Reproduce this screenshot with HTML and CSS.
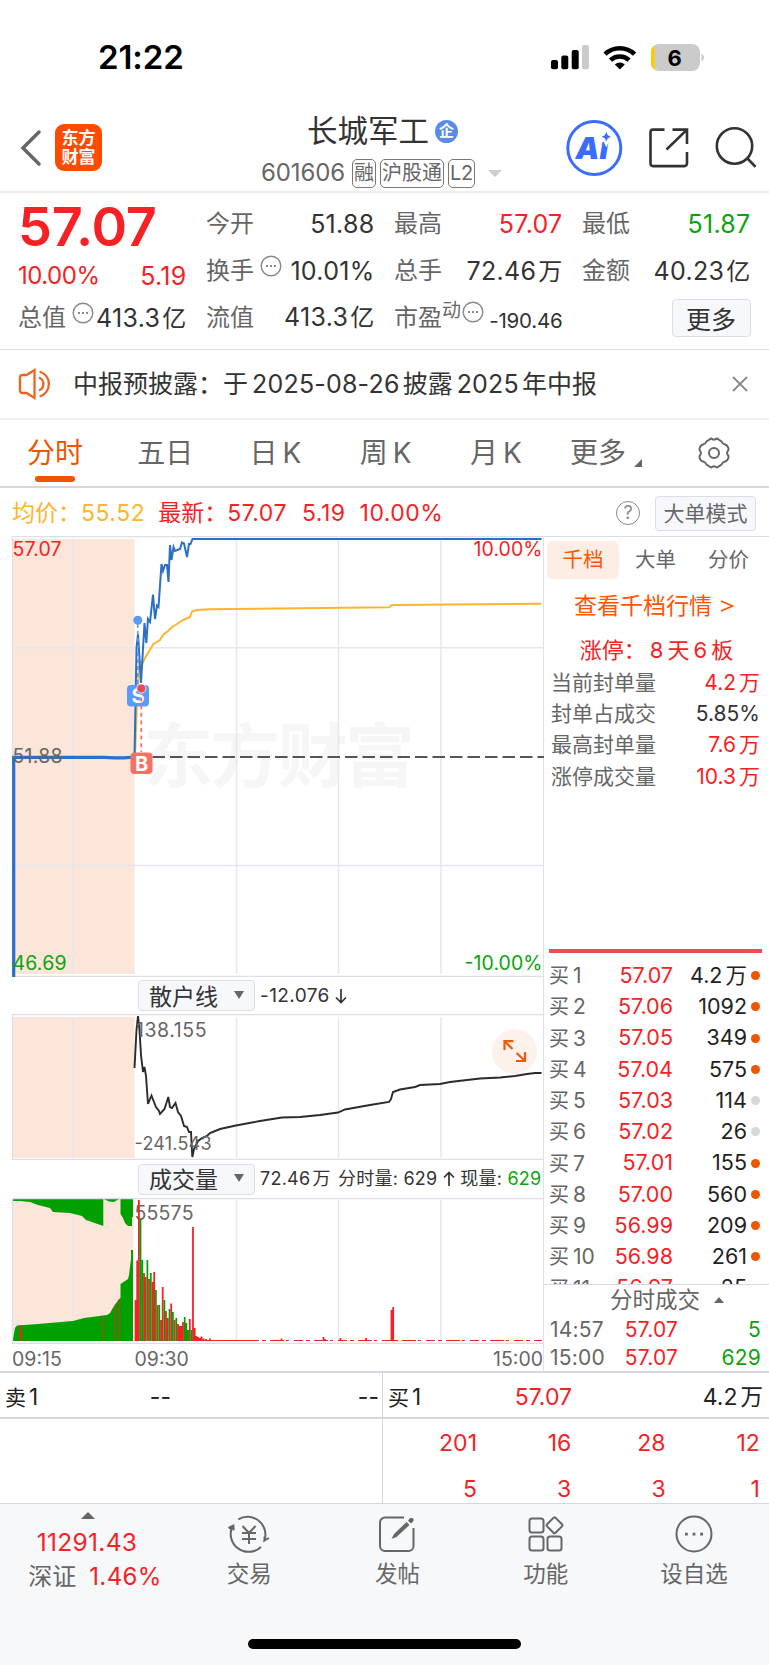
FILE: index.html
```html
<!DOCTYPE html>
<html lang="zh-CN">
<head>
    <meta charset="UTF-8">
    <title>长城军工 601606</title>
    <link rel="stylesheet" href="styles.css">
</head>
<body>
    <div class="status-bar">
        <span class="clock">21:22</span>
        <svg class="status-icons" width="156" height="30" viewBox="550 43 156 30">
            <rect x="551" y="60" width="7" height="9.3" rx="2"/>
            <rect x="561.3" y="55.500" width="7" height="13.800" rx="2"/>
            <rect x="571.700" y="50" width="7" height="19.300" rx="2"/>
            <rect x="582" y="45" width="7" height="24.300" rx="2" fill="#cbcbcb"/>
            <g fill="none" stroke="#000" stroke-width="4.600">
                <path d="M605 54.200a21.500 21.500 0 0 1 29.600 0"/>
                <path d="M610.500 60.200a13.500 13.500 0 0 1 18.600 0"/>
            </g>
            <path d="M619.800 69.500l-5-5a7.500 7.500 0 0 1 10 0z"/>
            <rect x="651" y="44" width="49" height="27" rx="8" fill="#cbcbcb"/>
            <path d="M654.500 45.400v24.200a8 8 0 0 1-3.500-6.600v-11a8 8 0 0 1 3.500-6.600z" fill="#fc0"/>
            <path d="M701.500 53.500q5 4 0 8z" fill="#cbcbcb"/>
            <text class="battery" x="667.500" y="65.500">6</text>
        </svg>
    </div>

    <div class="header">
        <svg class="back" width="22" height="38" viewBox="0 0 22 38"><path d="M19 3L3 19l16 16"/></svg>
        <div class="logo">东方<br>财富</div>
        <div class="title">
            <div class="name">长城军工<span class="corp">企</span></div>
            <div class="code">
                <span class="number">601606</span>
                <span class="tag">融</span>
                <span class="tag">沪股通</span>
                <span class="tag">L2</span>
                <span class="arrow-down"></span>
            </div>
        </div>
        <svg class="tools" width="196" height="60" viewBox="565 118 196 60">
            <circle cx="594.300" cy="148" r="26.500" fill="none" stroke="#3a6cff" stroke-width="3"/>
            <text class="ai" x="575.500 599.500" y="158.500">Ai</text>
            <path d="M606.300 132l1.500 3.200 3.200 1.500-3.200 1.500-1.500 3.200-1.500-3.200-3.200-1.500 3.200-1.500z" fill="#3a6cff" stroke="#fff" stroke-width="5" paint-order="stroke"/>
            <g fill="none" stroke="#333" stroke-width="2.600">
                <path d="M664.500 129.600H653a2.500 2.500 0 0 0-2.500 2.500v31.500a2.500 2.500 0 0 0 2.500 2.500h31.500a2.500 2.500 0 0 0 2.500-2.500V152M672.500 129.600H687V144M687 129.600L666.500 149.500"/>
                <circle cx="734.500" cy="146" r="17.700"/>
                <path d="M747.500 158.500l8 8.300"/>
            </g>
        </svg>
    </div>

    <div class="quote">
        <div class="col first">
            <div class="price">57.07</div>
            <div class="cell change"><b class="red">10.00%</b><b class="red">5.19</b></div>
            <div class="cell"><span>总值</span><svg class="more-dots" width="22" height="22" viewBox="0 0 22 22"><circle cx="11" cy="11" r="9.800"/><path d="M6 11h2m2 0h2m2 0h2"/></svg><b>413.3<i>亿</i></b></div>
        </div>
        <div class="col">
            <div class="cell"><span>今开</span><b>51.88</b></div>
            <div class="cell"><span>换手</span><svg class="more-dots" width="22" height="22" viewBox="0 0 22 22"><circle cx="11" cy="11" r="9.800"/><path d="M6 11h2m2 0h2m2 0h2"/></svg><b>10.01%</b></div>
            <div class="cell"><span>流值</span><b>413.3<i>亿</i></b></div>
        </div>
        <div class="col">
            <div class="cell"><span>最高</span><b class="red">57.07</b></div>
            <div class="cell"><span>总手</span><b>72.46<i>万</i></b></div>
            <div class="cell"><span>市盈<sup>动</sup></span><svg class="more-dots pe-dots" width="22" height="22" viewBox="0 0 22 22"><circle cx="11" cy="11" r="9.800"/><path d="M6 11h2m2 0h2m2 0h2"/></svg><b class="small">-190.46</b></div>
        </div>
        <div class="col">
            <div class="cell"><span>最低</span><b class="green">51.87</b></div>
            <div class="cell"><span>金额</span><b>40.23<i>亿</i></b></div>
            <div class="cell last"><button class="more">更多</button></div>
        </div>
    </div>

    <div class="notice">
        <svg width="36" height="42" viewBox="0 0 36 42">
            <path d="M2 14.500q0-2.500 2.500-2.500h4L16.500 7v28L8.500 30h-4q-2.500 0-2.500-2.500zM21 14.500a7 7 0 0 1 0 13M21.500 8.500a13 13 0 0 1 0 25"/>
        </svg>
        <span class="notice-text">中报预披露：于<b>2025-08-26</b>披露<b>2025</b>年中报</span>
        <svg class="close" width="16" height="16" viewBox="0 0 16 16"><path d="M1 1l14 14M15 1L1 15"/></svg>
    </div>

    <div class="tabs">
        <span class="tab active">分时</span>
        <span class="tab">五日</span>
        <span class="tab">日<b>K</b></span>
        <span class="tab">周<b>K</b></span>
        <span class="tab">月<b>K</b></span>
        <span class="tab">更多<i class="corner"></i></span>
        <svg class="gear" width="34" height="34" viewBox="0 0 34 34">
            <path d="M12.500 3.500Q14 2 15.500 3.200Q17 4.200 18.500 3.200Q20 2 21.500 3.500L24.500 5.500Q25.500 8 28 8.500Q30.500 9 31.500 12.500Q32 14 30.500 15.500Q29.500 17 30.500 18.500Q32 20 31.500 21.500Q30.500 25 28 25.500Q25.500 26 24.500 28.500L21.500 30.500Q20 32 18.500 30.800Q17 29.800 15.500 30.800Q14 32 12.500 30.500L9.500 28.500Q8.500 26 6 25.500Q3.500 25 2.500 21.500Q2 20 3.500 18.500Q4.500 17 3.500 15.500Q2 14 2.500 12.500Q3.500 9 6 8.500Q8.500 8 9.500 5.500z"/>
            <circle cx="17" cy="17" r="5"/>
        </svg>
    </div>

    <div class="summary">
        <span class="avg">均价：<b>55.52</b></span>
        <span class="red latest">最新：<b>57.07</b></span>
        <b class="red">5.19</b>
        <b class="red pct">10.00%</b>
        <span class="help">?</span>
        <button class="mode">大单模式</button>
    </div>

    <div class="main">
        <div class="charts">
            <!-- 分时走势 -->
            <svg width="544" height="441" viewBox="0 536 544 441">
                <rect x="12.500" y="539" width="122" height="435" fill="#fce5d9"/>
                <text class="watermark" x="143" y="782" textLength="272">东方财富</text>
                <path class="grid" d="M73 539V974M236.500 539V974M338.500 539V974M441 539V974M12 647.700H544M12 865.500H544"/>
                <path class="frame" d="M12.500 977V536.500H544M12 976.500H544"/>
                <path d="M135 757H544" stroke="#555" stroke-width="2" stroke-dasharray="12.500 5" fill="none"/>
                <path d="M135 757L137 700L139.500 661L142.600 663L145 658L148 653L151 648L153.500 644L160 640L163 635L168 631L172 627L177 624L183 620L190 617L192 611.500L197 610L210 609.300L389 607.200L392 605L541.500 603.800" fill="none" stroke="#fdb52e" stroke-width="2"/>
                <path d="M13.700 977V757.300H104L115 757.800H124L134.500 757" fill="none" stroke="#2b70c4" stroke-width="3.200"/>
                <path d="M134.500 757L136.500 648L138 634L141 683L144.500 623L146.300 643L148 619L150 622L153 594.500L155 619L157 605.500L158.500 607L161.500 564L163 571L165 565L167 565L168.500 582L170 545L171.500 560L173.500 547L175 551L180 549L182 542.500L184 543.500L187 557L189 544L190.500 544L192.500 539H541.500" fill="none" stroke="#2b70c4" stroke-width="2"/>
                <path d="M137.800 624V685" stroke="#5a9bf7" stroke-width="1.600" stroke-dasharray="4 3"/>
                <rect x="127" y="685" width="22" height="21.500" rx="4" fill="#5a9bf7"/>
                <text class="mark" x="138" y="703">S</text>
                <path d="M141.300 690V752" stroke="#fb6f62" stroke-width="1.800" stroke-dasharray="4 3.600"/>
                <rect x="130.500" y="752.500" width="22" height="21.500" rx="4" fill="#fb6f62"/>
                <text class="mark" x="141.500" y="771">B</text>
                <circle cx="137.800" cy="620.300" r="4.500" fill="#5a9bf7"/>
                <circle cx="141.300" cy="688.500" r="4.600" fill="#e04f57" stroke="#fff" stroke-width=".8"/>
                <g class="axis">
                    <text x="12.500" y="556" textLength="49" fill="#f52225">57.07</text>
                    <text x="12.500" y="763" textLength="50">51.88</text>
                    <text x="12.500" y="969.500" textLength="54" fill="#0ca30c">46.69</text>
                    <text x="473.500" y="556" textLength="69" fill="#f52225">10.00%</text>
                    <text x="464.500" y="969.500" textLength="78" fill="#0ca30c">-10.00%</text>
                </g>
            </svg>

            <div class="indicator">
                <button class="picker">散户线</button>
                <b>-12.076 <svg width="12" height="16" viewBox="0 0 12 16"><path d="M6 1v13M1 9.500l5 5 5-5"/></svg></b>
            </div>

            <!-- 散户线 -->
            <svg width="544" height="146" viewBox="0 1014 544 146">
                <rect x="12.500" y="1017" width="122" height="141" fill="#fce5d9"/>
                <path class="grid" d="M73 1017V1158M236.500 1017V1158M338.500 1017V1158M441 1017V1158"/>
                <path class="frame" d="M12.500 1160V1014.500H544M12 1159.500H544"/>
                <circle cx="514.500" cy="1051.500" r="22.500" fill="#fdf1eb"/>
                <path d="M504.500 1050V1041.200H513.500M504.500 1041.200L512.500 1049M525 1052V1061H516M525 1061L516.500 1053" fill="none" stroke="#f15a0a" stroke-width="2.200"/>
                <path d="M134.500 1068L136.500 1030L138 1016L139.500 1030L141 1055L143 1072L144.500 1067L146 1076L148 1104L151.500 1095.500L154 1102L156 1107L159 1111L160 1114L164.500 1109L168.300 1097L170 1107L172 1108L175.500 1103L178 1112L181 1116L184 1126L187 1127L189 1132L191 1132L192.300 1157L194 1149L198 1141L202 1138L207 1136L210 1133L220 1129L236 1125.500L260 1121L282 1117.500L300 1117L320 1115L338 1112.500L345 1109.500L370 1105L389 1102L391 1099L393 1092L400 1089.500L415 1087L420 1085L440 1084L450 1082L480 1078.500L500 1077.500L515 1076L527 1074L535 1073H541.500" fill="none" stroke="#2b2b2b" stroke-width="1.900"/>
                <g class="axis">
                    <text x="136" y="1036.500" textLength="70.500">138.155</text>
                    <text class="low" x="134.500" y="1149.500" textLength="77">-241.543</text>
                </g>
            </svg>

            <div class="indicator second">
                <button class="picker">成交量</button>
                <b>72.46<i>万</i> 分时量: 629 <svg width="12" height="16" viewBox="0 0 12 16"><path d="M6 15V2M1 6.500l5-5 5 5"/></svg> 现量: <em class="green">629</em></b>
            </div>

            <!-- 成交量 -->
            <svg width="544" height="146" viewBox="0 1198 544 146">
                <rect x="12.500" y="1199" width="121" height="142" fill="#fce5d9"/>
                <path class="grid" d="M73 1200V1341M236.500 1200V1341M338.500 1200V1341M441 1200V1341"/>
                <path d="M12.500 1199V1201H20L30 1202L38 1205L50 1208L53 1212L70 1213L82 1216L86 1220L103.300 1226V1199zM104 1199L109 1201.500L114 1202L119 1199zM120.500 1199V1214L123 1218L125 1223L128 1226H132V1217H133V1199z" fill="#00a000"/>
                <path d="M12.500 1341L15 1328L17 1325.500L38 1324L73 1321L84 1318L107 1315L110 1313L114 1306L119 1299L120.500 1298V1284L128 1279L129 1275L131 1259V1250H133V1341z" fill="#00a000"/>
                <path d="M20.500 1341V1325.500" stroke="#f52225" stroke-width="2"/>
                <path d="M102.500 1341V1316M114.700 1341V1306M119.500 1341V1299" stroke="#a84a1a" stroke-width="1.300"/>
                <path class="frame" d="M12.500 1344V1198.500H544M12 1343.500H544"/>
                <g class="axis"><text x="134.500" y="1219.500" textLength="59">55575</text></g>
                <path d="M135.500 1341V1300M137.200 1341V1260.500M138.900 1341V1200M144 1341V1273M145.700 1341V1277M149 1341V1279M152.500 1341V1282M154.200 1341V1272M157.600 1341V1305M161 1341V1320M162.700 1341V1287M166 1341V1311M167.800 1341V1318M171.200 1341V1303.500M174.600 1341V1320M178 1341V1324M179.700 1341V1326M181.400 1341V1326M183 1341V1322M189.800 1341V1319M193 1341V1227M194.700 1341V1328M196.400 1341V1336M198 1341V1337M199.800 1341V1338M201.500 1341V1336.500M203.500 1341V1338.500M206 1341V1339M210 1341V1338.500M281.500 1341V1338.500M323.500 1341V1337M325 1341V1339M340.500 1341V1338M366 1341V1338M391.500 1341V1310M393.200 1341V1307" stroke="#f52225" stroke-width="1.800"/>
                <path d="M140.500 1341V1219M142.300 1341V1260M147.400 1341V1260M150.800 1341V1273M155.900 1341V1290M159.300 1341V1305M164.400 1341V1300M169.500 1341V1309M172.900 1341V1312M176.300 1341V1318M184.700 1341V1317M186.400 1341V1323M188.100 1341V1330M191.400 1341V1330" stroke="#00a000" stroke-width="1.700"/>
                <path d="M195 1340.500H250" stroke="#f52225" stroke-width="1.200"/>
                <path d="M250 1340.500H542" stroke="#f52225" stroke-width="1" stroke-dasharray="9 3 4 4 14 2 3 5"/>
            </svg>

            <div class="times"><span>09:15</span><span>09:30</span><span class="end">15:00</span></div>
        </div>

        <div class="side">
            <div class="side-tabs">
                <span class="active">千档</span>
                <span>大单</span>
                <span>分价</span>
            </div>
            <div class="side-link">查看千档行情 <svg width="14" height="14" viewBox="0 0 14 14"><path d="M1 2l11.500 5L1 12"/></svg></div>
            <div class="limit">涨停：<b>8</b>天<b>6</b>板</div>
            <div class="stats">
                <div class="stat"><span>当前封单量</span><b class="red">4.2<i>万</i></b></div>
                <div class="stat"><span>封单占成交</span><b>5.85%</b></div>
                <div class="stat"><span>最高封单量</span><b class="red">7.6<i>万</i></b></div>
                <div class="stat"><span>涨停成交量</span><b class="red">10.3<i>万</i></b></div>
            </div>
            <div class="orders">
                <div class="order"><span>买<b>1</b></span><b class="red">57.07</b><b>4.2<i>万</i></b><em class="dot"></em></div>
                <div class="order"><span>买<b>2</b></span><b class="red">57.06</b><b>1092</b><em class="dot"></em></div>
                <div class="order"><span>买<b>3</b></span><b class="red">57.05</b><b>349</b><em class="dot"></em></div>
                <div class="order"><span>买<b>4</b></span><b class="red">57.04</b><b>575</b><em class="dot"></em></div>
                <div class="order"><span>买<b>5</b></span><b class="red">57.03</b><b>114</b><em class="dot gray"></em></div>
                <div class="order"><span>买<b>6</b></span><b class="red">57.02</b><b>26</b><em class="dot gray"></em></div>
                <div class="order"><span>买<b>7</b></span><b class="red">57.01</b><b>155</b><em class="dot"></em></div>
                <div class="order"><span>买<b>8</b></span><b class="red">57.00</b><b>560</b><em class="dot"></em></div>
                <div class="order"><span>买<b>9</b></span><b class="red">56.99</b><b>209</b><em class="dot"></em></div>
                <div class="order"><span>买<b>10</b></span><b class="red">56.98</b><b>261</b><em class="dot"></em></div>
                <div class="order"><span>买<b>11</b></span><b class="red">56.97</b><b>25</b><em class="dot gray"></em></div>
            </div>
            <div class="deals-title">分时成交<i class="arrow-up"></i></div>
            <div class="deal"><b>14:57</b><b class="red">57.07</b><b class="green">5</b></div>
            <div class="deal"><b>15:00</b><b class="red">57.07</b><b class="green">629</b></div>
        </div>
    </div>

    <div class="queue">
        <div class="sell">
            <div class="queue-head"><span>卖<b>1</b></span><b>--</b><b>--</b></div>
        </div>
        <div class="buy">
            <div class="queue-head"><span>买<b>1</b></span><b class="red">57.07</b><b>4.2<i>万</i></b></div>
            <div class="queue-row"><b>201</b><b>16</b><b>28</b><b>12</b></div>
            <div class="queue-row"><b>5</b><b>3</b><b>3</b><b>1</b></div>
        </div>
    </div>

    <div class="footer">
        <div class="index">
            <i class="arrow-up"></i>
            <b class="red">11291.43</b>
            <span>深证<b class="red">1.46%</b></span>
        </div>
        <div class="nav">
            <svg width="44" height="40" viewBox="0 0 44 40"><path d="M11.300 5.300A18 18 0 0 1 37.500 26.500l4.500-2.500M37.500 27.500v-5M34 33A18 18 0 0 1 5.500 12L1.500 14M6.500 11.500v5M15.500 12l6.500 7 6.500-7M15 19h14M15 25h14M22 19v11"/></svg>
            <span>交易</span>
        </div>
        <div class="nav">
            <svg width="44" height="40" viewBox="0 0 44 40"><path d="M29 3.500H10a5 5 0 0 0-5 5V32a5 5 0 0 0 5 5H33.500a5 5 0 0 0 5-5V14"/><path class="pen" d="M16.500 25l2.500-5L31.500 8l3 3L21.500 23zM33 6.500l2-2.200q1.500-1.300 3 .1 1.400 1.500 0 3l-2 2.200z"/></svg>
            <span>发帖</span>
        </div>
        <div class="nav">
            <svg width="44" height="40" viewBox="0 0 44 40"><rect x="5.500" y="4.500" width="14" height="14" rx="2.500"/><rect x="5.500" y="22.500" width="14" height="14" rx="2.500"/><rect x="23.500" y="22.500" width="14" height="14" rx="2.500"/><rect x="24.500" y="5.300" width="12" height="12" rx="1.500" transform="rotate(45 30.500 11.300)"/></svg>
            <span>功能</span>
        </div>
        <div class="nav">
            <svg width="44" height="40" viewBox="0 0 44 40"><circle cx="22" cy="20" r="17.500"/><path class="pen" d="M13 18.800h2.800v2.800H13zM20.600 18.800h2.800v2.800h-2.800zM28.200 18.800H31v2.800h-2.800z"/></svg>
            <span>设自选</span>
        </div>
    </div>
    <div class="home-area"><div class="home-bar"></div></div>
</body>
</html>
```

FILE: styles.css
```css
* {
    box-sizing: border-box;
}
body {
    margin: 0;
    width: 769px;
    height: 1665px;
    overflow: hidden;
    background: #fff;
    color: #333;
    font-family: Inter, "Noto Sans CJK SC", sans-serif;
    font-size: 24px;
    line-height: 1;
    white-space: nowrap;
}
b, i, em {
    font-weight: 400;
    font-style: normal;
}
button {
    font-family: inherit;
    padding: 0;
    border: 1.5px solid #dcdee6;
    border-radius: 4px;
    background: #f7f8fc;
    color: #333;
}
svg {
    display: block;
    flex: none;
}
.red {
    color: #f52225;
}
.green {
    color: #0ca30c;
}

/* status bar */
.status-bar {
    height: 104px;
    display: flex;
    justify-content: space-between;
    padding: 40px 63px 0 98px;
}
.clock {
    color: #000;
    font-size: 33px;
    font-weight: 600;
    line-height: 35px;
    letter-spacing: -0.1px;
}
.status-icons {
    margin-top: 3px;
}
.battery {
    font-size: 22px;
    font-weight: 700;
}

/* header */
.header {
    height: 89px;
    display: flex;
    border-bottom: 2px solid #eee;
    padding-left: 20px;
}
.back {
    margin-top: 25px;
    fill: none;
    stroke: #666;
    stroke-width: 3.5;
    stroke-linecap: round;
}
.logo {
    width: 47px;
    height: 47px;
    margin: 20px 0 0 13px;
    padding-top: 5px;
    border-radius: 9px;
    background: #ff4a00;
    color: #fff;
    font-size: 17px;
    font-weight: 700;
    line-height: 19px;
    text-align: center;
}
.title {
    width: 280px;
    margin-left: 141px;
    margin-right: 42px;
    padding: 10px 0 0 18px;
}
.name {
    display: flex;
    align-items: center;
    gap: 6px;
    height: 35px;
    margin-left: 46px;
    font-size: 30.5px;
}
.corp {
    width: 23px;
    height: 23px;
    border-radius: 50%;
    background: #5b8be8;
    color: #fff;
    font-size: 15px;
    font-weight: 700;
    line-height: 22px;
    text-align: center;
}
.code {
    display: flex;
    align-items: center;
    gap: 4px;
    height: 36px;
    margin-top: 6px;
    color: #666;
}
.number {
    width: 87px;
    letter-spacing: -0.1px;
}
.tag {
    height: 29px;
    padding: 0 1px;
    border: 1.5px solid #777;
    border-radius: 5px;
    font-size: 20px;
    line-height: 26px;
}
.tag:nth-child(4) {
    letter-spacing: -0.3px;
}
.arrow-down {
    margin-left: 9px;
    border: 7px solid transparent;
    border-top-color: #ccc;
    border-bottom: 0;
}
.tools {
    margin-top: 14px;
}
.ai {
    fill: #3a6cff;
    font-size: 30px;
    font-weight: 900;
    font-style: italic;
}

/* quote */
.quote {
    display: grid;
    grid-template-columns: repeat(4, 168.6px);
    column-gap: 19.4px;
    height: 157px;
    padding: 8px 18px 0;
    border-bottom: 1.5px solid #ddd;
}
.cell {
    display: flex;
    align-items: center;
    height: 46.7px;
}
.cell span {
    color: #666;
}
.cell b {
    margin-left: auto;
    font-size: 25px;
    letter-spacing: 0.3px;
}
.cell b i {
    margin-left: 2px;
    font-size: 24px;
}
.cell sup {
    font-size: 19px;
    line-height: 0;
    vertical-align: 9px;
}
.cell b.small {
    font-size: 20.5px;
    padding-top: 7px;
    letter-spacing: -0.2px;
}
.more-dots {
    margin: -11px -8px 0 6px;
    fill: none;
    stroke: #888;
    stroke-width: 1.4;
}
.more-dots path {
    stroke-width: 2;
}
.cell .pe-dots {
    margin-left: 1px;
}
.price {
    height: 51px;
    color: #f52225;
    font-size: 54px;
    font-weight: 600;
    line-height: 51px;
    letter-spacing: -0.2px;
}
.change {
    height: 48px;
}
.change b:first-child {
    margin-left: 0;
    font-size: 24px;
    letter-spacing: -0.5px;
}
.first .cell:last-child {
    height: 36px;
}
.last {
    justify-content: flex-end;
}
.more {
    width: 79px;
    height: 38px;
    padding-bottom: 4px;
    font-size: 25px;
}

/* notice */
.notice {
    display: flex;
    align-items: center;
    height: 70px;
    padding: 0 21px 0 18px;
    border-bottom: 2px solid #eee;
}
.notice svg {
    fill: none;
    stroke: #ee6420;
    stroke-width: 2.3;
}
.notice-text {
    margin-left: 19px;
    font-size: 25px;
}
.notice-text b {
    margin: 0 3px 0 4px;
    letter-spacing: 0.2px;
}
.notice .close {
    margin-left: auto;
    stroke: #888;
    stroke-width: 1.8;
}

/* tabs */
.tabs {
    display: flex;
    height: 68px;
    border-bottom: 2px solid #d5d7e0;
    color: #666;
    font-size: 28px;
    line-height: 67px;
}
.tab {
    position: relative;
    width: 110.2px;
    text-align: center;
}
.tab b {
    margin-left: 5px;
}
.tab.active {
    color: #ee5500;
}
.tab.active::after {
    content: "";
    position: absolute;
    left: 35px;
    bottom: 4px;
    width: 40px;
    height: 6px;
    border-radius: 3px;
    background: #ee5500;
}
.corner {
    display: inline-block;
    margin-left: 8px;
    border-left: 8px solid transparent;
    border-bottom: 8px solid #666;
    vertical-align: -4px;
}
.gear {
    margin: 16px 0 0 36px;
    fill: none;
    stroke: #666;
    stroke-width: 2;
}

/* summary */
.summary {
    display: flex;
    align-items: center;
    height: 48px;
    padding: 2px 13px 0 12px;
    font-size: 23px;
}
.summary b {
    letter-spacing: 0.5px;
}
.avg {
    color: #fdb52e;
    margin-right: 13px;
}
.latest {
    margin-right: 15px;
}
.pct {
    margin-left: 14px;
}
.help {
    width: 24px;
    height: 24px;
    margin-left: auto;
    margin-right: 15px;
    border: 1.7px solid #888;
    border-radius: 50%;
    color: #888;
    font-size: 18px;
    line-height: 21px;
    text-align: center;
}
.mode {
    width: 101px;
    height: 35px;
    padding-bottom: 3px;
    color: #666;
    font-size: 21px;
}

/* charts */
.main {
    display: flex;
    height: 837px;
    border-bottom: 2px solid #d5d7e0;
}
.charts {
    width: 544px;
    border-right: 1px solid #dfe1ea;
}
.grid {
    fill: none;
    stroke: #e4e7ee;
    stroke-width: 1.5;
}
.frame {
    fill: none;
    stroke: #dcdfe7;
    stroke-width: 1.3;
}
.watermark {
    fill: #f6f6f6;
    font-size: 70px;
    font-weight: 700;
}
.axis text {
    font-size: 19.5px;
}
.axis text:not([fill]) {
    fill: #666;
}
.axis .low {
    font-size: 18px;
}
.mark {
    fill: #fff;
    font-size: 20px;
    font-weight: 700;
    text-anchor: middle;
}
.indicator {
    display: flex;
    align-items: center;
    height: 37px;
    padding-left: 138px;
    font-size: 19px;
    letter-spacing: 0.4px;
}
.indicator.second {
    height: 38px;
    font-size: 18px;
    letter-spacing: 0.25px;
}
.indicator b {
    margin-left: 5px;
}
.indicator b i {
    margin: 0 2px;
}
.indicator svg {
    display: inline-block;
    vertical-align: -2px;
    fill: none;
    stroke: #333;
    stroke-width: 1.7;
}
.picker {
    display: flex;
    align-items: center;
    justify-content: space-between;
    width: 117px;
    height: 31px;
    padding: 0 10px 2px;
    font-size: 23px;
}
.picker::after {
    content: "";
    border: 5px solid transparent;
    border-top: 8px solid #666;
    border-bottom: 0;
}
.times {
    display: flex;
    height: 29px;
    padding: 0 0 0 12px;
    color: #666;
    font-size: 19.5px;
    line-height: 31px;
}
.times span {
    width: 122.5px;
}
.times .end {
    width: auto;
    margin-left: auto;
}

/* side panel */
.side {
    width: 225px;
    border-top: 1px solid #dcdfe7;
}
.side-tabs {
    display: flex;
    justify-content: space-between;
    padding: 4px 20px 0 3px;
    color: #666;
    font-size: 20.5px;
    line-height: 38px;
}
.side-tabs .active {
    width: 72px;
    border-radius: 6px;
    background: #feede5;
    color: #ff5500;
    text-align: center;
}
.side-tabs span:nth-child(2) {
    margin-right: 16px;
}
.side-link {
    display: flex;
    justify-content: center;
    align-items: center;
    gap: 8px;
    height: 54px;
    margin-left: -5px;
    color: #ff5500;
    font-size: 23px;
}
.side-link svg {
    fill: none;
    stroke: #ff5500;
    stroke-width: 1.8;
}
.limit {
    height: 34px;
    color: #f52225;
    font-size: 22px;
    line-height: 34px;
    text-align: center;
}
.limit b {
    margin: 0 4px;
}
.stats {
    height: 286px;
    margin: 0 7px 0 5px;
    padding: 0 2px;
    border-bottom: 4px solid #f04b50;
}
.stat {
    display: flex;
    align-items: center;
    justify-content: space-between;
    height: 31.2px;
    color: #666;
    font-size: 21px;
}
.stat b:not(.red) {
    color: #333;
}
.stat i, .order i {
    margin-left: 3px;
}
.orders {
    height: 332px;
    padding-top: 7px;
    overflow: hidden;
    border-bottom: 1.5px solid #d5d7e0;
}
.order {
    display: grid;
    grid-template-columns: 51px 73px 74px 9px;
    align-items: center;
    height: 31.25px;
    padding-left: 5px;
    color: #222;
    font-size: 21.5px;
    text-align: right;
}
.order span {
    color: #666;
    font-size: 20px;
    text-align: left;
}
.order span b {
    margin-left: 4px;
    font-size: 21px;
}
.order .red {
    color: #f52225;
}
.dot {
    width: 9px;
    height: 9px;
    margin-left: 4px;
    border-radius: 50%;
    background: #ee5500;
}
.dot.gray {
    background: #d5d8de;
}
.deals-title {
    display: flex;
    align-items: center;
    justify-content: center;
    gap: 14px;
    height: 30px;
    margin-left: 21px;
    color: #666;
    font-size: 22.5px;
}
.arrow-up {
    border: 5px solid transparent;
    border-bottom: 6px solid #666;
    border-top: 0;
}
.deal {
    display: grid;
    grid-template-columns: 55px 73px 83px;
    align-items: center;
    height: 28.5px;
    padding-left: 6px;
    font-size: 21px;
    letter-spacing: 0.2px;
    text-align: right;
}
.deal b:first-child {
    color: #666;
    text-align: left;
}

/* queue */
.queue {
    display: flex;
    height: 131px;
    border-bottom: 1.5px solid #d5d7e0;
    color: #222;
}
.sell {
    width: 383px;
    border-right: 1.5px solid #d5d7e0;
}
.buy {
    width: 386px;
}
.queue-head {
    display: grid;
    grid-template-columns: 65px 119px 1fr;
    align-items: center;
    height: 46px;
    padding: 4px 6px 0 5px;
    border-bottom: 2px solid #d5d7e0;
    font-size: 23px;
    text-align: right;
}
.sell .queue-head {
    padding-right: 3px;
    grid-template-columns: 65px 101px 1fr;
}
.queue-head span {
    font-size: 21px;
    text-align: left;
}
.queue-head span b, .queue-head i {
    margin-left: 3px;
    font-size: 22.5px;
}
.queue-row {
    display: grid;
    grid-template-columns: 94px repeat(3, 94.3px);
    align-items: center;
    height: 49px;
    color: #f52225;
    font-size: 23px;
    text-align: right;
}
.queue-row + .queue-row {
    height: 42px;
}

/* footer */
.footer {
    display: flex;
    height: 92px;
    padding-left: 15px;
    background: #f7f8fa;
    color: #666;
}
.index {
    display: flex;
    flex-direction: column;
    align-items: center;
    width: 160px;
    padding: 8px 0 0;
}
.index .arrow-up {
    margin-right: 15px;
    border-width: 0 7px 7px;
}
.index > b {
    margin: 11px 16px 0 0;
    font-size: 24.5px;
    letter-spacing: 0.3px;
}
.index span {
    margin-top: 10px;
}
.index span b {
    margin-left: 13px;
    letter-spacing: 0.4px;
}
.nav {
    display: flex;
    flex-direction: column;
    align-items: center;
    width: 148.3px;
    padding-top: 10px;
    font-size: 22.5px;
}
.nav svg {
    fill: none;
    stroke: #666;
    stroke-width: 2;
}
.nav .pen {
    fill: #666;
    stroke: none;
}
.nav span {
    margin-top: 9px;
}
.home-area {
    height: 69px;
    padding-top: 43px;
    background: #f7f8fa;
}
.home-bar {
    width: 273px;
    height: 10px;
    margin: 0 auto;
    border-radius: 5px;
    background: #000;
}
```
